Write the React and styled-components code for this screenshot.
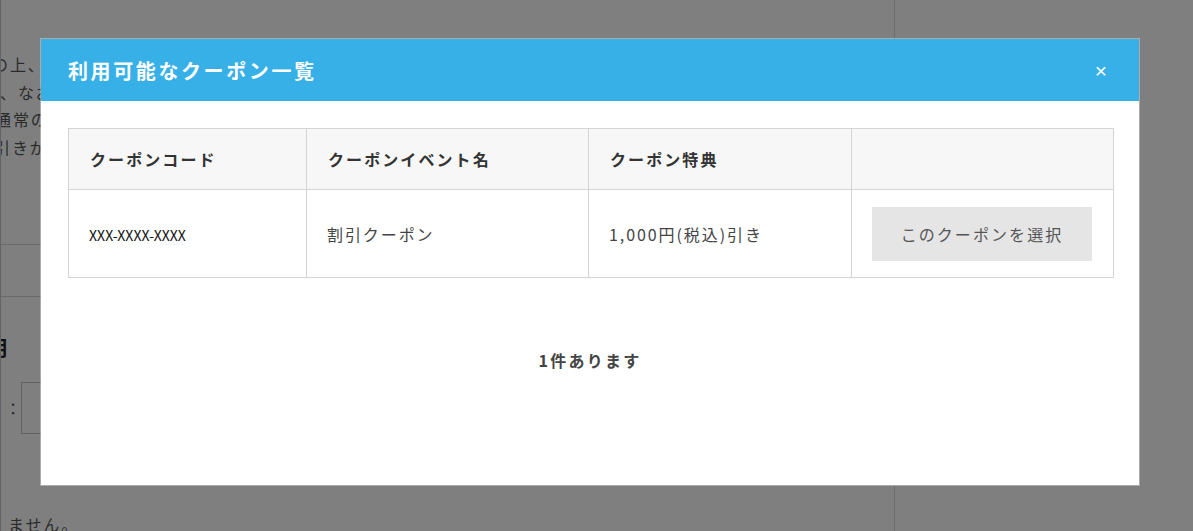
import React from 'react'
import styled, { createGlobalStyle } from 'styled-components'

const GlobalStyle = createGlobalStyle`
  html, body {
    margin: 0;
    padding: 0;
    background: #fff;
  }
  body {
    font-family: 'Noto Sans CJK JP', 'Noto Sans', sans-serif;
    color: #333;
    letter-spacing: 0.12em;
    overflow: hidden;
  }
`

/* page sitting behind the dialog */
const Page = styled.div`
  position: relative;
  display: flex;
  width: 1193px;
  height: 531px;
  overflow: hidden;
`

const Main = styled.main`
  width: 893px;
  border-left: 1px solid #c8c8c8;
  border-right: 1px solid #d8d8d8;
  overflow: hidden;
`

const Side = styled.aside`
  flex: 1;
`

const Notice = styled.div`
  padding-top: 51px;
  font-size: 16px;
  line-height: 27.5px;
  color: #555;
`

const NoticeLine = styled.div`
  white-space: nowrap;
  margin-left: ${p => p.$shift}px;
`

const Divider = styled.hr`
  border: 0;
  border-top: 1px solid #d4d4d4;
  margin: ${p => p.$top}px 0 0;
`

const SectionTitle = styled.h3`
  margin: 36px 0 0 -14px;
  font-size: 20px;
  font-weight: 700;
  color: #222;
  white-space: nowrap;
`

const FieldRow = styled.div`
  display: flex;
  align-items: center;
  margin: 20px 0 0 4px;
  font-size: 16px;
  color: #555;
`

const FieldLabel = styled.span`
  letter-spacing: 0;
`

const FieldInput = styled.div`
  width: 240px;
  height: 50px;
  border: 1px solid #c4c4c4;
  background: #fff;
`

const Footnote = styled.p`
  margin: 78px 0 0 7px;
  font-size: 16px;
  color: #555;
  white-space: nowrap;
`

/* dialog */
const Overlay = styled.div`
  position: absolute;
  inset: 0;
  background: rgba(0, 0, 0, 0.5);
  padding: 39px 0 0 41px;
`

const Modal = styled.div`
  width: 1098px;
  height: 446px;
  background: #fff;
  box-shadow: 0 0 0 1px rgba(255, 255, 255, 0.35);
  display: flex;
  flex-direction: column;
`

const ModalHeader = styled.header`
  height: 62px;
  flex-shrink: 0;
  background: #36b0e6;
  display: flex;
  align-items: center;
  justify-content: space-between;
  padding: 0 32px 0 27px;
`

const ModalTitle = styled.h2`
  margin: 0;
  font-size: 20px;
  font-weight: 700;
  color: #fff;
  letter-spacing: 0.13em;
`

const CloseButton = styled.button`
  border: 0;
  background: none;
  color: #fff;
  font-family: 'Liberation Sans', Arial, sans-serif;
  font-size: 21px;
  line-height: 1;
  letter-spacing: 0;
  padding: 0;
  cursor: pointer;
`

const ModalBody = styled.div`
  padding: 27px 27px 0;
  display: flex;
  flex-direction: column;
`

const Table = styled.table`
  width: 1045px;
  border-collapse: collapse;
  table-layout: fixed;
  font-size: 16px;
`

const Th = styled.th`
  height: 60px;
  padding: 0 21px;
  background: #f7f7f7;
  border: 1px solid #d4d4d4;
  text-align: left;
  font-weight: 700;
  color: #333;
  letter-spacing: 0.13em;
`

const Td = styled.td`
  height: 87px;
  padding: 0 20px;
  border: 1px solid #d4d4d4;
  color: #444;
  font-size: 16px;
`

const CodeText = styled.span`
  font-size: 14px;
  color: #111;
  letter-spacing: 0.05px;
`

const SelectButton = styled.button`
  width: 220px;
  height: 54px;
  border: 0;
  background: #e5e5e5;
  color: #555;
  font-family: inherit;
  font-size: 16px;
  letter-spacing: 0.13em;
  cursor: pointer;
`

const Count = styled.p`
  margin: 70px 0 0;
  text-align: center;
  font-size: 16px;
  font-weight: 700;
  color: #444;
  line-height: 24px;
  letter-spacing: 0.14em;
`

const columns = [
  { label: 'クーポンコード', width: 238 },
  { label: 'クーポンイベント名', width: 282 },
  { label: 'クーポン特典', width: 263 },
  { label: '', width: 262 },
]

const coupons = [
  { code: 'XXX-XXXX-XXXX', name: '割引クーポン', benefit: '1,000円(税込)引き' },
]

const App = () => {
  return (
    <>
      <GlobalStyle />
      <Page>
        <Main>
          <Notice>
            <NoticeLine $shift={-9}>の上、ご注文手続きへお進みください。</NoticeLine>
            <NoticeLine $shift={-1}>、なお、クーポンは1回のご注文につき1枚のみご利用いただけます。</NoticeLine>
            <NoticeLine $shift={-6}>通常の商品価格から割引されます。</NoticeLine>
            <NoticeLine $shift={-7}>引きが適用されるのはお支払い確定後となります。</NoticeLine>
          </Notice>
          <Divider $top={83} />
          <Divider $top={51} />
          <SectionTitle>明</SectionTitle>
          <FieldRow>
            <FieldLabel>：</FieldLabel>
            <FieldInput />
          </FieldRow>
          <Footnote>ません。</Footnote>
        </Main>
        <Side />

        <Overlay>
          <Modal>
            <ModalHeader>
              <ModalTitle>利用可能なクーポン一覧</ModalTitle>
              <CloseButton aria-label="閉じる">×</CloseButton>
            </ModalHeader>
            <ModalBody>
              <Table>
                <colgroup>
                  {columns.map((c, i) => <col key={i} style={{ width: c.width }} />)}
                </colgroup>
                <thead>
                  <tr>
                    {columns.map((c, i) => <Th key={i}>{c.label}</Th>)}
                  </tr>
                </thead>
                <tbody>
                  {coupons.map(c => (
                    <tr key={c.code}>
                      <Td><CodeText>{c.code}</CodeText></Td>
                      <Td>{c.name}</Td>
                      <Td>{c.benefit}</Td>
                      <Td>
                        <SelectButton>このクーポンを選択</SelectButton>
                      </Td>
                    </tr>
                  ))}
                </tbody>
              </Table>
              <Count>{coupons.length}件あります</Count>
            </ModalBody>
          </Modal>
        </Overlay>
      </Page>
    </>
  )
}

export default App
